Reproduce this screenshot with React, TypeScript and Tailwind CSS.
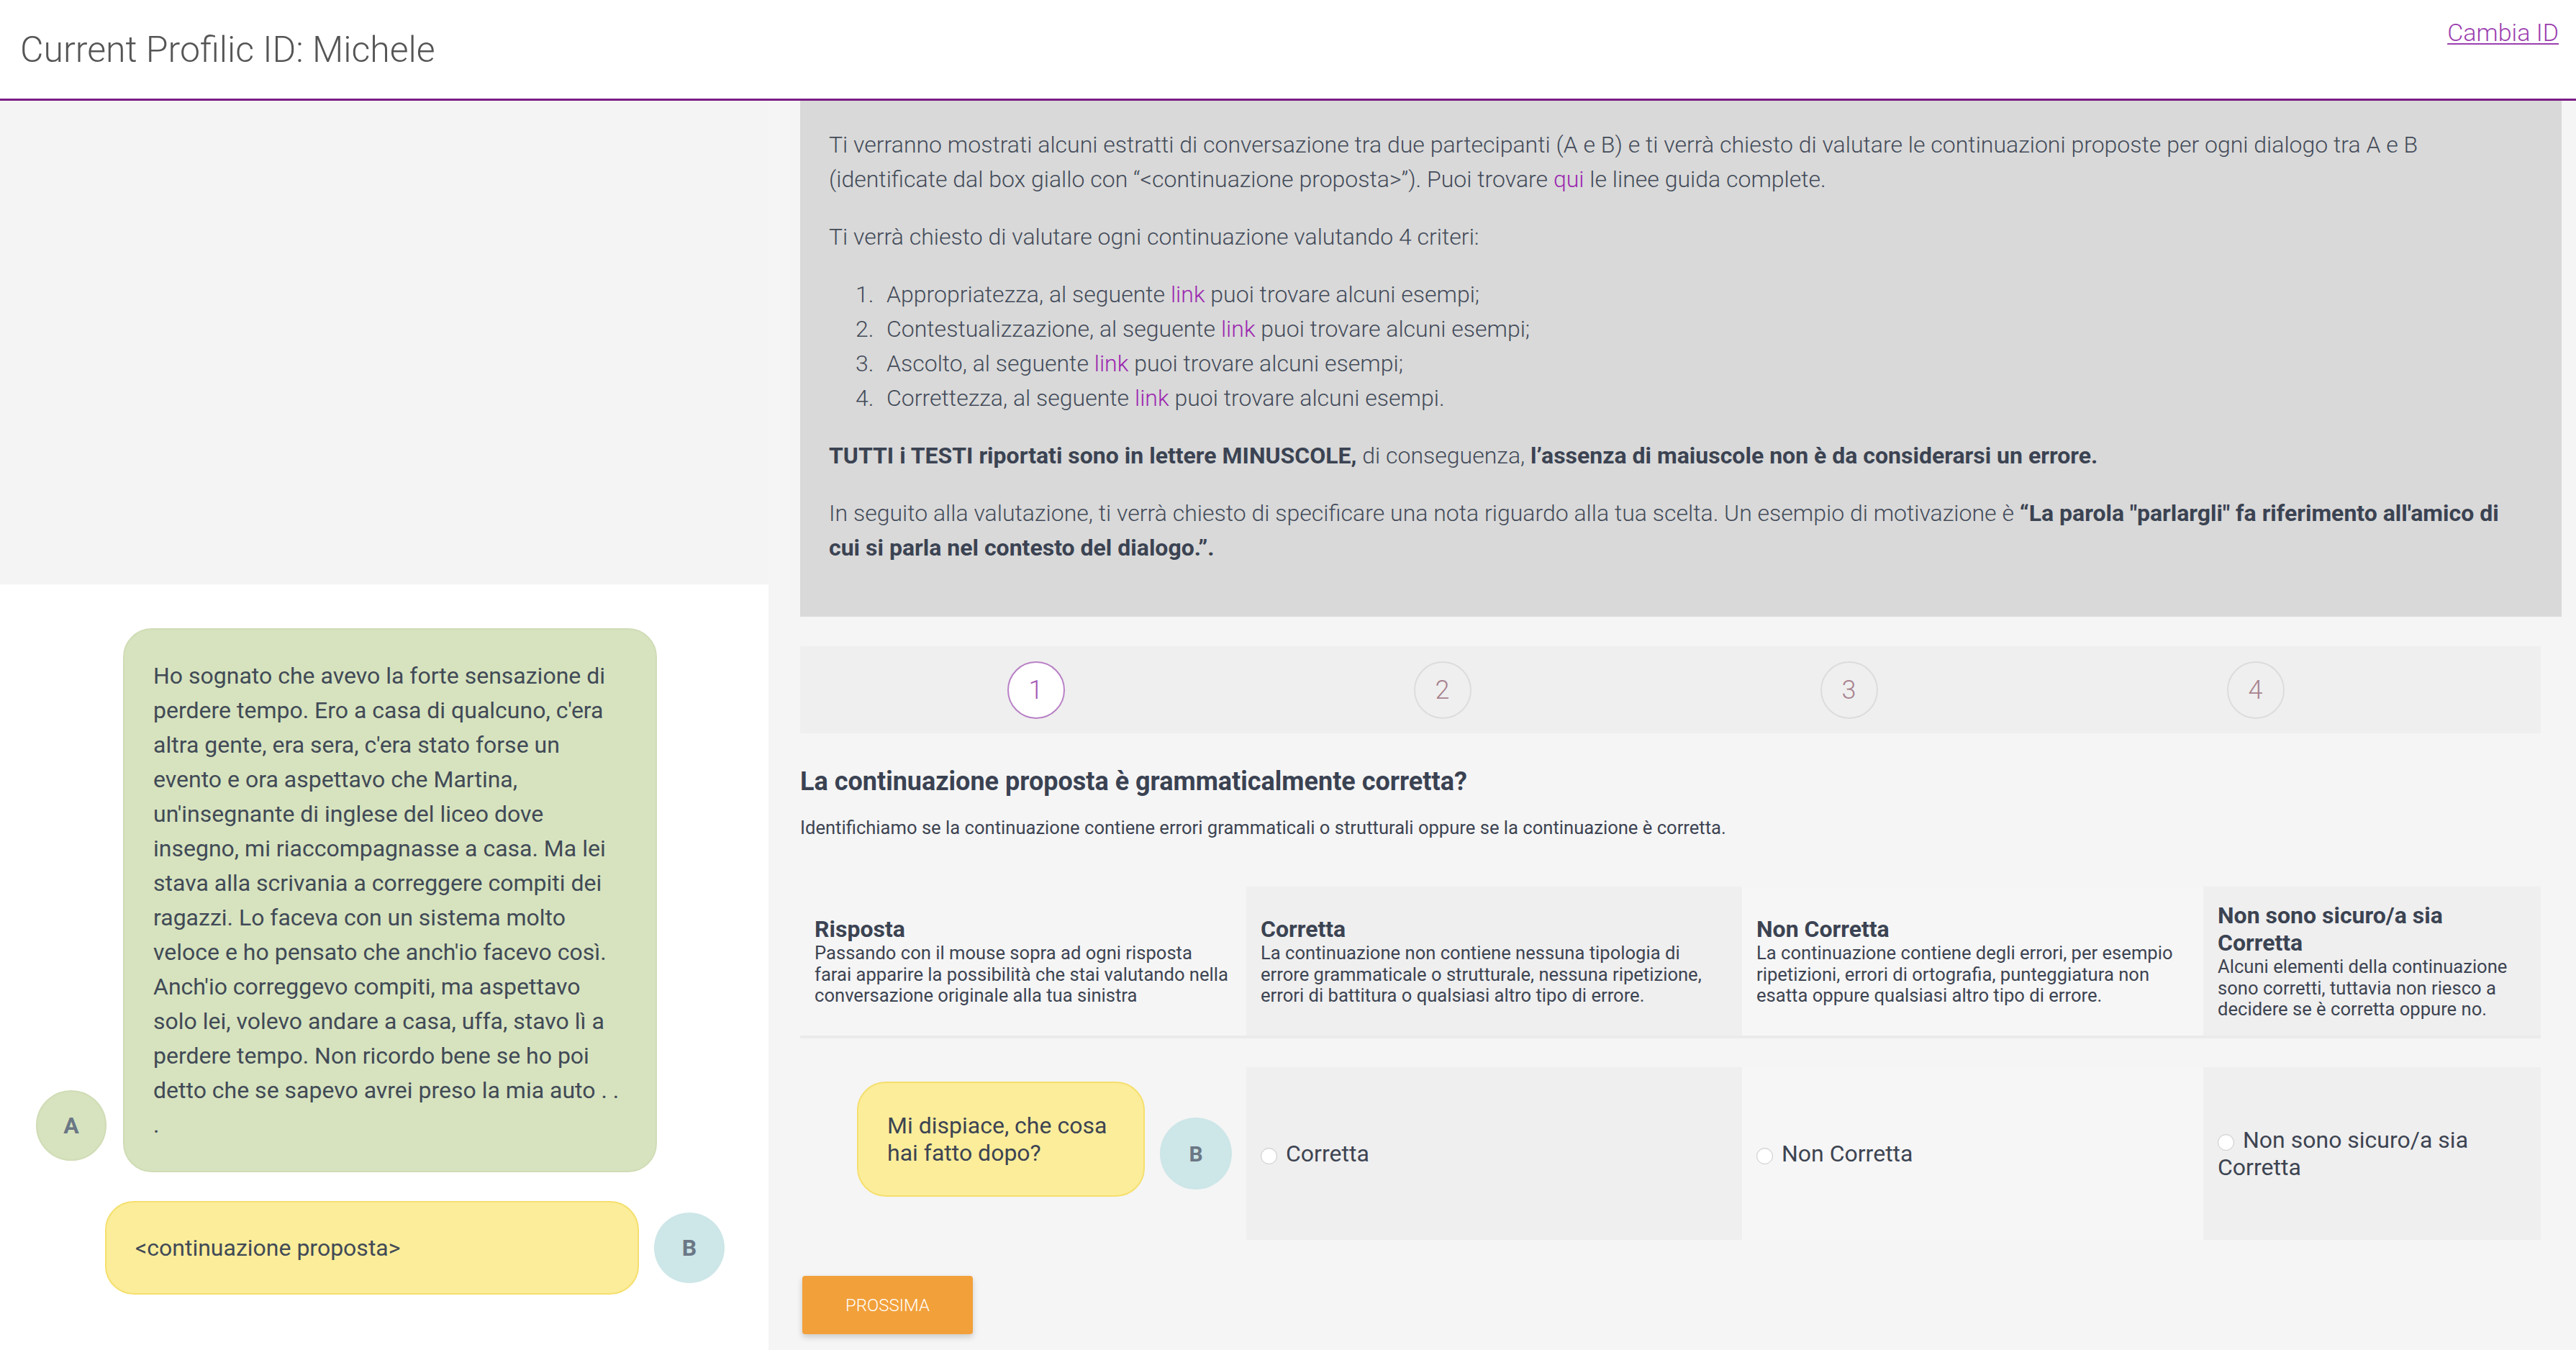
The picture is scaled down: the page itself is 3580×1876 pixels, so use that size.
import React from "react";

function Radio() {
  return (
    <span className="inline-block w-[23px] h-[23px] rounded-full bg-white border border-[#c9c9c9] align-[-4px] mr-[12px] shadow-[inset_0_1px_1px_rgba(0,0,0,0.06)]" />
  );
}

function StepCircle({ n, active }: { n: number; active?: boolean }) {
  return (
    <div className="w-[565px] flex justify-center">
      <div
        className={
          active
            ? "w-[80px] h-[80px] rounded-full border-2 border-[#b880c6] bg-white flex items-center justify-center text-[36px] font-light text-[#a35ab6]"
            : "w-[80px] h-[80px] rounded-full border-2 border-[#dcdcdc] flex items-center justify-center text-[36px] font-light text-[#a8838f]"
        }
      >
        {n}
      </div>
    </div>
  );
}

function HeadCell({ title, desc, bg }: { title: string; desc: string; bg: string }) {
  return (
    <div className={"h-[207px] px-[20px] flex flex-col justify-center " + bg}>
      <div className="text-[32px] leading-[38px] font-bold text-[#3b4352]">{title}</div>
      <div className="text-[25.6px] leading-[29.4px] text-[#3d4452]">{desc}</div>
    </div>
  );
}

function Item({ n, label }: { n: number; label: string }) {
  return (
    <li className="flex">
      <span className="w-[43px] shrink-0">{n}.</span>
      <span>
        {label}, al seguente <span className="text-[#9c27b0]">link</span> puoi trovare alcuni esempi
        {n === 4 ? "." : ";"}
      </span>
    </li>
  );
}

export default function App() {
  return (
    <div className="w-[3580px] h-[1876px] overflow-hidden bg-[#f5f5f5] font-['Roboto',sans-serif]">
      <header className="h-[140px] bg-white border-b-[3px] border-[#7b1c85] flex justify-between">
        <h1 className="self-center pl-[28px] text-[50px] font-light text-[#555555] leading-none">
          Current Profilic ID: Michele
        </h1>
        <a
          href="#"
          className="self-start mt-[25px] mr-[24px] text-[34px] leading-[40px] font-light text-[#9c3fb0] underline decoration-[2px] underline-offset-[3px]"
        >
          Cambia ID
        </a>
      </header>

      <div className="flex">
        {/* left column */}
        <div className="w-[1068px] flex flex-col h-[1736px]">
          <div className="h-[672px] bg-[#f4f4f4]" />
          <div className="flex-1 bg-white pt-[61px]">
            <div className="flex items-end pl-[50px]">
              <div className="w-[98px] h-[98px] mb-[16px] rounded-full bg-[#d7e3bf] border-2 border-[#d0dcb5] flex items-center justify-center text-[32px] font-bold text-[#6b7785]">
                A
              </div>
              <div className="ml-[23px] w-[742px] rounded-[40px] bg-[#d7e3bf] border-2 border-[#d0dcb5] px-[40px] py-[40px] text-[32px] leading-[48px] text-[#414a56]">
                Ho sognato che avevo la forte sensazione di perdere tempo. Ero a casa di qualcuno, c'era altra gente, era sera, c'era stato forse un evento e ora aspettavo che Martina, un'insegnante di inglese del liceo dove insegno, mi riaccompagnasse a casa. Ma lei stava alla scrivania a correggere compiti dei ragazzi. Lo faceva con un sistema molto veloce e ho pensato che anch'io facevo così. Anch'io correggevo compiti, ma aspettavo solo lei, volevo andare a casa, uffa, stavo lì a perdere tempo. Non ricordo bene se ho poi detto che se sapevo avrei preso la mia auto . . .
              </div>
            </div>
            <div className="flex items-center pl-[146px] mt-[40px]">
              <div className="w-[742px] rounded-[40px] bg-[#fced9a] border-2 border-[#f5df6e] px-[40px] py-[39px] text-[32px] leading-[48px] text-[#414a56]">
                &lt;continuazione proposta&gt;
              </div>
              <div className="ml-[21px] w-[98px] h-[98px] rounded-full bg-[#cde6e8] flex items-center justify-center text-[32px] font-bold text-[#6b7785]">
                B
              </div>
            </div>
          </div>
        </div>

        {/* right column */}
        <div className="pl-[44px] flex flex-col">
          <div className="w-[2448px] bg-[#d9d9d9] pt-[37px] px-[40px] pb-[40px] text-[32px] leading-[48px] font-light text-[#434b59]">
            <p className="mb-[32px]">
              Ti verranno mostrati alcuni estratti di conversazione tra due partecipanti (A e B) e ti verrà chiesto di valutare le continuazioni proposte per ogni dialogo tra A e B (identificate dal box giallo con “&lt;continuazione proposta&gt;”). Puoi trovare{" "}
              <span className="text-[#9c27b0]">qui</span> le linee guida complete.
            </p>
            <p className="mb-[32px]">Ti verrà chiesto di valutare ogni continuazione valutando 4 criteri:</p>
            <ol className="mb-[32px] pl-[37px]">
              <Item n={1} label="Appropriatezza" />
              <Item n={2} label="Contestualizzazione" />
              <Item n={3} label="Ascolto" />
              <Item n={4} label="Correttezza" />
            </ol>
            <p className="mb-[32px]">
              <b className="font-bold text-[#3b4352]">TUTTI i TESTI riportati sono in lettere MINUSCOLE,</b> di conseguenza,{" "}
              <b className="font-bold text-[#3b4352]">l’assenza di maiuscole non è da considerarsi un errore.</b>
            </p>
            <p className="mb-[32px]">
              In seguito alla valutazione, ti verrà chiesto di specificare una nota riguardo alla tua scelta. Un esempio di motivazione è{" "}
              <b className="font-bold text-[#3b4352]">“La parola "parlargli" fa riferimento all'amico di cui si parla nel contesto del dialogo.”.</b>
            </p>
          </div>

          <div className="mt-[41px] w-[2419px] h-[121px] bg-[#efefef] flex items-center pl-[45px]">
            <StepCircle n={1} active />
            <StepCircle n={2} />
            <StepCircle n={3} />
            <StepCircle n={4} />
          </div>

          <h2 className="mt-[46px] text-[36px] leading-[43px] font-bold text-[#3a4252]">
            La continuazione proposta è grammaticalmente corretta?
          </h2>
          <p className="mt-[24px] text-[25.6px] leading-[36px] text-[#3d4452]">
            Identifichiamo se la continuazione contiene errori grammaticali o strutturali oppure se la continuazione è corretta.
          </p>

          <div className="mt-[64px] w-[2419px]">
            <div className="grid grid-cols-[620px_689px_641px_469px] border-b-4 border-[#ebebeb]">
              <HeadCell
                bg="bg-[#f5f5f5]"
                title="Risposta"
                desc="Passando con il mouse sopra ad ogni risposta farai apparire la possibilità che stai valutando nella conversazione originale alla tua sinistra"
              />
              <HeadCell
                bg="bg-[#efefef]"
                title="Corretta"
                desc="La continuazione non contiene nessuna tipologia di errore grammaticale o strutturale, nessuna ripetizione, errori di battitura o qualsiasi altro tipo di errore."
              />
              <HeadCell
                bg="bg-[#f6f6f6]"
                title="Non Corretta"
                desc="La continuazione contiene degli errori, per esempio ripetizioni, errori di ortografia, punteggiatura non esatta oppure qualsiasi altro tipo di errore."
              />
              <HeadCell
                bg="bg-[#efefef]"
                title="Non sono sicuro/a sia Corretta"
                desc="Alcuni elementi della continuazione sono corretti, tuttavia non riesco a decidere se è corretta oppure no."
              />
            </div>

            <div className="mt-[40px] grid grid-cols-[620px_689px_641px_469px] h-[240px]">
              <div className="flex items-center pl-[79px]">
                <div className="self-start mt-[20px] w-[400px] rounded-[40px] bg-[#fced9a] border-2 border-[#f5df6e] px-[40px] py-[40px] text-[32px] leading-[38px] text-[#3d4452]">
                  Mi dispiace, che cosa hai fatto dopo?
                </div>
                <div className="ml-[21px] w-[100px] h-[100px] rounded-full bg-[#cde6e8] flex items-center justify-center text-[30px] font-bold text-[#6b7785]">
                  B
                </div>
              </div>
              <div className="bg-[#efefef] flex items-center px-[20px]">
                <p className="text-[32px] leading-[38px] text-[#3d4452]">
                  <Radio />
                  Corretta
                </p>
              </div>
              <div className="bg-[#f6f6f6] flex items-center px-[20px]">
                <p className="text-[32px] leading-[38px] text-[#3d4452]">
                  <Radio />
                  Non Corretta
                </p>
              </div>
              <div className="bg-[#efefef] flex items-center px-[20px]">
                <p className="text-[32px] leading-[38px] text-[#3d4452]">
                  <Radio />
                  Non sono sicuro/a sia Corretta
                </p>
              </div>
            </div>
          </div>

          <button className="mt-[50px] ml-[3px] w-[237px] h-[81px] rounded-[4px] bg-[#f2a03a] text-white text-[24px] font-light shadow-[0_4px_8px_rgba(0,0,0,0.18)]">
            PROSSIMA
          </button>
        </div>
      </div>
    </div>
  );
}
